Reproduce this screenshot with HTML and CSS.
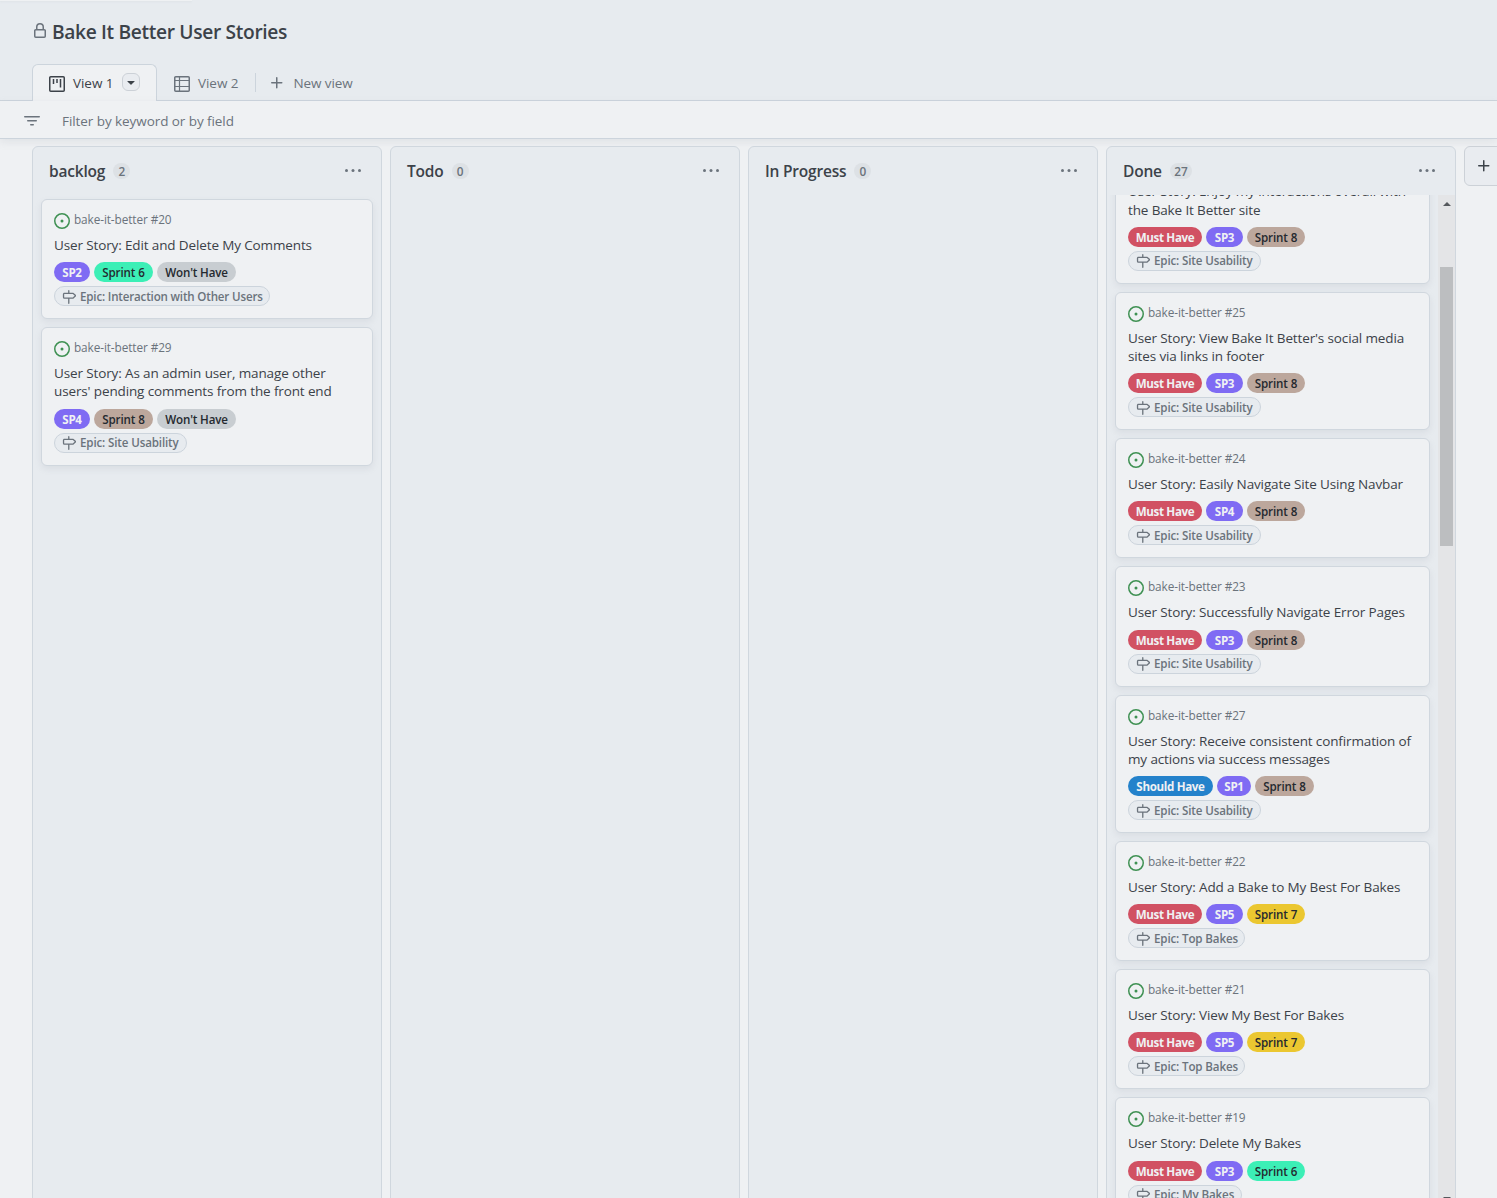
FILE: index.html
```
<!DOCTYPE html>
<html lang="en">
<head>
<meta charset="utf-8">
<title>Bake It Better User Stories</title>
<link rel="stylesheet" href="styles.css">
</head>
<body>
<svg class="sprite" aria-hidden="true">
  <symbol id="lock" viewBox="0 0 16 16"><path d="M4 4a4 4 0 0 1 8 0v2h.25c.966 0 1.75.784 1.75 1.75v5.5A1.75 1.75 0 0 1 12.25 15h-8.5A1.75 1.75 0 0 1 2 13.25v-5.5C2 6.784 2.784 6 3.75 6H4Zm8.25 3.5h-8.5a.25.25 0 0 0-.25.25v5.5c0 .138.112.25.25.25h8.5a.25.25 0 0 0 .25-.25v-5.5a.25.25 0 0 0-.25-.25ZM10.5 6V4a2.5 2.5 0 1 0-5 0v2Z"/></symbol>
  <symbol id="board-icon" viewBox="0 0 16 16"><path fill="none" stroke="currentColor" stroke-width="1.5" d="M1.75.75h12.5a1 1 0 0 1 1 1v12.500a1 1 0 0 1-1 1H1.750a1 1 0 0 1-1-1V1.750a1 1 0 0 1 1-1ZM4.500 3v5M8 3v4M11.500 3v8.500"/></symbol>
  <symbol id="table-icon" viewBox="0 0 16 16"><path fill="none" stroke="currentColor" stroke-width="1.5" d="M1.750.75h12.500a1 1 0 0 1 1 1v12.500a1 1 0 0 1-1 1H1.750a1 1 0 0 1-1-1V1.750a1 1 0 0 1 1-1Z"/><path fill="none" stroke="currentColor" stroke-width="1.2" d="M.75 4.500h14.500M5.500.75v14.500M.75 10.500h14.500"/></symbol>
  <symbol id="plus" viewBox="0 0 16 16"><path d="M7.750 2a.75.75 0 0 1 .75.75V7h4.250a.75.75 0 0 1 0 1.500H8.500v4.250a.75.75 0 0 1-1.500 0V8.500H2.750a.75.75 0 0 1 0-1.500H7V2.750A.75.75 0 0 1 7.750 2Z"/></symbol>
  <symbol id="caret" viewBox="0 0 16 16"><path d="m4.427 7.427 3.396 3.396a.25.25 0 0 0 .354 0l3.396-3.396A.25.25 0 0 0 11.396 7H4.604a.25.25 0 0 0-.177.427Z"/></symbol>
  <symbol id="filter" viewBox="0 0 16 16"><path d="M.75 3h14.500a.75.75 0 0 1 0 1.500H.75a.75.75 0 0 1 0-1.500ZM3 7.750A.75.75 0 0 1 3.750 7h8.500a.75.75 0 0 1 0 1.500h-8.500A.75.75 0 0 1 3 7.750Zm3 4a.75.75 0 0 1 .75-.75h2.500a.75.75 0 0 1 0 1.500h-2.500a.75.75 0 0 1-.75-.75Z"/></symbol>
  <symbol id="dots" viewBox="0 0 16 16"><circle cx="1.500" cy="7.500" r="1.500"/><circle cx="8" cy="7.500" r="1.500"/><circle cx="14.500" cy="7.500" r="1.500"/></symbol>
  <symbol id="open" viewBox="0 0 16 16"><path d="M8 9.500a1.500 1.500 0 1 0 0-3 1.500 1.500 0 0 0 0 3Z"/><path d="M8 0a8 8 0 1 1 0 16A8 8 0 0 1 8 0ZM1.500 8a6.500 6.500 0 1 0 13 0 6.500 6.500 0 0 0-13 0Z"/></symbol>
  <symbol id="milestone" viewBox="0 0 16 16"><path d="M7.750 0a.75.75 0 0 1 .75.75V3h3.634c.414 0 .814.147 1.130.414l2.070 1.750a1.750 1.750 0 0 1 0 2.672l-2.070 1.750a1.750 1.750 0 0 1-1.130.414H8.500v5.250a.75.75 0 0 1-1.500 0V10H2.750A1.750 1.750 0 0 1 1 8.250v-3.500C1 3.784 1.784 3 2.750 3H7V.75A.75.75 0 0 1 7.750 0Zm4.384 8.500a.25.25 0 0 0 .161-.06l2.070-1.750a.248.248 0 0 0 0-.38l-2.070-1.750a.25.25 0 0 0-.161-.06H2.750a.25.25 0 0 0-.25.25v3.500c0 .138.112.25.25.25h9.384Z"/></symbol>
</svg>

<header class="project-header">
  <div class="top-strip"></div>
  <h1><svg class="icon"><use href="#lock"/></svg>Bake It Better User Stories</h1>
  <nav class="tabs">
    <a class="tab active"><svg class="icon"><use href="#board-icon"/></svg><span>View 1</span><span class="tab-menu"><svg class="icon"><use href="#caret"/></svg></span></a>
    <a class="tab"><svg class="icon"><use href="#table-icon"/></svg><span>View 2</span></a>
    <span class="divider"></span>
    <a class="tab new-view"><svg class="icon"><use href="#plus"/></svg><span>New view</span></a>
  </nav>
</header>

<div class="filter-bar"><svg class="icon"><use href="#filter"/></svg><span>Filter by keyword or by field</span></div>

<main class="board">
  <section class="column">
    <div class="column-head"><h2>backlog</h2><span class="count">2</span><svg class="icon"><use href="#dots"/></svg></div>
    <div class="cards">
      <article class="card">
        <div class="meta"><svg class="icon"><use href="#open"/></svg><span>bake-it-better #20</span></div>
        <p>User Story: Edit and Delete My Comments</p>
        <div class="labels"><span class="label sp left">SP2</span><span class="label sprint green left">Sprint 6</span><span class="label wont">Won't Have</span><span class="label epic users"><svg class="icon"><use href="#milestone"/></svg>Epic: Interaction with Other Users</span></div>
      </article>
      <article class="card">
        <div class="meta"><svg class="icon"><use href="#open"/></svg><span>bake-it-better #29</span></div>
        <p>User Story: As an admin user, manage other<br>users' pending comments from the front end</p>
        <div class="labels"><span class="label sp left">SP4</span><span class="label sprint brown left">Sprint 8</span><span class="label wont">Won't Have</span><span class="label epic site"><svg class="icon"><use href="#milestone"/></svg>Epic: Site Usability</span></div>
      </article>
    </div>
  </section>

  <section class="column">
    <div class="column-head"><h2>Todo</h2><span class="count">0</span><svg class="icon"><use href="#dots"/></svg></div>
  </section>

  <section class="column">
    <div class="column-head"><h2>In Progress</h2><span class="count">0</span><svg class="icon"><use href="#dots"/></svg></div>
  </section>

  <section class="column">
    <div class="column-head"><h2>Done</h2><span class="count">27</span><svg class="icon"><use href="#dots"/></svg></div>
    <div class="scroller">
      <div class="cards scrolled">
        <article class="card">
          <div class="meta"></div>
          <p>User Story: Enjoy my interactions overall with<br>the Bake It Better site</p>
          <div class="labels"><span class="label must">Must Have</span><span class="label sp">SP3</span><span class="label sprint brown">Sprint 8</span><span class="label epic site"><svg class="icon"><use href="#milestone"/></svg>Epic: Site Usability</span></div>
        </article>
        <article class="card">
          <div class="meta"><svg class="icon"><use href="#open"/></svg><span>bake-it-better #25</span></div>
          <p>User Story: View Bake It Better's social media<br>sites via links in footer</p>
          <div class="labels"><span class="label must">Must Have</span><span class="label sp">SP3</span><span class="label sprint brown">Sprint 8</span><span class="label epic site"><svg class="icon"><use href="#milestone"/></svg>Epic: Site Usability</span></div>
        </article>
        <article class="card">
          <div class="meta"><svg class="icon"><use href="#open"/></svg><span>bake-it-better #24</span></div>
          <p>User Story: Easily Navigate Site Using Navbar</p>
          <div class="labels"><span class="label must">Must Have</span><span class="label sp">SP4</span><span class="label sprint brown">Sprint 8</span><span class="label epic site"><svg class="icon"><use href="#milestone"/></svg>Epic: Site Usability</span></div>
        </article>
        <article class="card">
          <div class="meta"><svg class="icon"><use href="#open"/></svg><span>bake-it-better #23</span></div>
          <p>User Story: Successfully Navigate Error Pages</p>
          <div class="labels"><span class="label must">Must Have</span><span class="label sp">SP3</span><span class="label sprint brown">Sprint 8</span><span class="label epic site"><svg class="icon"><use href="#milestone"/></svg>Epic: Site Usability</span></div>
        </article>
        <article class="card">
          <div class="meta"><svg class="icon"><use href="#open"/></svg><span>bake-it-better #27</span></div>
          <p>User Story: Receive consistent confirmation of<br>my actions via success messages</p>
          <div class="labels"><span class="label should">Should Have</span><span class="label sp narrow">SP1</span><span class="label sprint brown left">Sprint 8</span><span class="label epic site"><svg class="icon"><use href="#milestone"/></svg>Epic: Site Usability</span></div>
        </article>
        <article class="card">
          <div class="meta"><svg class="icon"><use href="#open"/></svg><span>bake-it-better #22</span></div>
          <p>User Story: Add a Bake to My Best For Bakes</p>
          <div class="labels"><span class="label must">Must Have</span><span class="label sp">SP5</span><span class="label sprint yellow">Sprint 7</span><span class="label epic top"><svg class="icon"><use href="#milestone"/></svg>Epic: Top Bakes</span></div>
        </article>
        <article class="card">
          <div class="meta"><svg class="icon"><use href="#open"/></svg><span>bake-it-better #21</span></div>
          <p>User Story: View My Best For Bakes</p>
          <div class="labels"><span class="label must">Must Have</span><span class="label sp">SP5</span><span class="label sprint yellow">Sprint 7</span><span class="label epic top"><svg class="icon"><use href="#milestone"/></svg>Epic: Top Bakes</span></div>
        </article>
        <article class="card">
          <div class="meta"><svg class="icon"><use href="#open"/></svg><span>bake-it-better #19</span></div>
          <p>User Story: Delete My Bakes</p>
          <div class="labels"><span class="label must">Must Have</span><span class="label sp">SP3</span><span class="label sprint green">Sprint 6</span><span class="label epic my"><svg class="icon"><use href="#milestone"/></svg>Epic: My Bakes</span></div>
        </article>
      </div>
      <div class="scrollbar"><i class="up"></i><i class="thumb"></i><i class="down"></i></div>
    </div>
  </section>

  <div class="add-column"><svg class="icon"><use href="#plus"/></svg></div>
</main>
</body>
</html>
```
FILE: styles.css
```
* { box-sizing: border-box; }
html { height: 100%; overflow: hidden; }
body {
  margin: 0;
  height: 1198px;
  overflow: hidden;
  display: flex;
  flex-direction: column;
  background: #eff1f3;
  color: #3c4249;
  font: 13.5px/1.3 "Open Sans", "Noto Sans", sans-serif;
  letter-spacing: -0.1px;
}
h1, h2, p { margin: 0; }
.sprite { position: absolute; width: 0; height: 0; }
.icon { width: 16px; height: 16px; flex: none; fill: currentColor; color: #6b737c; display: block; }

.project-header {
  flex: none;
  height: 101px;
  background: #e7ebef;
  border-bottom: 1px solid #ccd4dc;
  padding: 18px 32px 0;
}
.top-strip {
  position: absolute;
  top: 0;
  left: 0;
  width: 192px;
  height: 1px;
  background: #eff1f3;
  box-shadow: 0 1px 2px rgba(140, 149, 159, .12), 0 8px 24px rgba(140, 149, 159, .04);
}
h1 {
  display: flex;
  align-items: center;
  gap: 4px;
  height: 28px;
  font-size: 19.2px;
  font-weight: 600;
  letter-spacing: -0.34px;
}
h1 .icon { margin-top: -2px; }

.tabs { display: flex; height: 37px; margin-top: 18px; }
.tab { display: flex; align-items: center; gap: 8px; color: #6b737c; padding: 2px 17px 0; letter-spacing: -0.05px; }
.tab.active {
  color: #3c4249;
  width: 125px;
  padding: 1px 16px 0 16px;
  border: 1px solid #ccd4dc;
  border-bottom: 0;
  border-radius: 6px 6px 0 0;
  background: #eff1f3;
}
.tab.active .icon { color: #3c4249; }
.tab-menu {
  width: 18px;
  height: 18px;
  border: 1px solid #ccd1d7;
  border-radius: 6px;
  background: #e9ecf0;
  display: flex;
  align-items: center;
  justify-content: center;
  margin: -3px 0 0 auto;
}
.divider { width: 1px; height: 19px; background: #ccd4dc; align-self: center; }
.new-view { padding-left: 13px; letter-spacing: -0.1px; }
.new-view > .icon { margin-top: -2px; }

.filter-bar {
  flex: none;
  height: 38px;
  padding: 3px 24px 0;
  display: flex;
  align-items: center;
  gap: 22px;
  color: #6b737c;
  border-bottom: 1px solid #ccd4dc;
  box-shadow: 0 3px 8px rgba(140, 149, 159, .16);
  letter-spacing: -0.07px;
}
.filter-bar span { padding-top: 1px; }

.board { display: flex; flex: none; gap: 8px; height: 1061px; padding: 7px 0 0 32px; overflow: hidden; }
.column {
  width: 350px;
  flex: none;
  display: flex;
  flex-direction: column;
  background: #e7ebef;
  border: 1px solid #d0d7de;
  border-radius: 6px 6px 0 0;
}
.column-head { display: flex; align-items: center; height: 48px; padding: 0 20px 0 16px; flex: none; }
h2 { font-size: 15.5px; font-weight: 600; letter-spacing: -0.2px; line-height: 24px; }
.count {
  height: 16px;
  min-width: 17px;
  padding: 0 4.500px;
  margin-left: 8px;
  border-radius: 8px;
  background: #dde1e5;
  color: #6b737c;
  font-size: 11.800px;
  font-weight: 600;
  line-height: 16px;
  text-align: center;
}
.column-head .icon { margin-left: auto; }

.cards { display: flex; flex-direction: column; gap: 8px; padding: 4px 8px; flex: 1; min-width: 0; }
.card {
  flex: none;
  padding: 12px;
  background: #eff1f3;
  border: 1px solid #d0d7de;
  border-radius: 6px;
  box-shadow: 0 3px 6px rgba(140, 149, 159, .15);
}
.meta {
  display: flex;
  gap: 4px;
  height: 24px;
  font-size: 11.8px;
  line-height: 14px;
  letter-spacing: -0.1px;
  color: #6b737c;
}
.meta .icon { color: #3f9153; margin-top: 1px; }
.card p { line-height: 18.2px; letter-spacing: -0.13px; white-space: nowrap; }
.labels { display: flex; flex-wrap: wrap; gap: 4px; margin-top: 8px; }
.label {
  height: 20px;
  border-radius: 10px;
  font-size: 11.6px;
  font-weight: 700;
  line-height: 21.4px;
  text-align: center;
  white-space: nowrap;
  letter-spacing: -0.34px;
  color: #eff1f3;
}
.sp { width: 37px; background: #7f6bf3; }
.sp.left { width: 36px; }
.sp.narrow { width: 34px; }
.sprint { width: 58px; color: #24292f; font-weight: 600; letter-spacing: -0.12px; }
.sprint.left { width: 59px; }
.green { background: #3cefb6; }
.brown { background: #bca79c; }
.yellow { background: #ebc730; }
.wont { width: 79px; background: #c8cdd1; color: #24292f; font-weight: 600; letter-spacing: -0.16px; }
.must { width: 74px; background: #d15163; }
.should { width: 85px; background: #2482cb; }
.epic {
  display: flex;
  align-items: center;
  gap: 4px;
  padding: 1.400px 0 0 7px;
  border: 1px solid #ccd4dc;
  background: #e7ebef;
  color: #6b737c;
  font-weight: 600;
  line-height: 16px;
  letter-spacing: -0.14px;
}
.epic .icon { width: 14px; height: 14px; }
.users { width: 216px; letter-spacing: -0.18px; }
.site { width: 133px; }
.top { width: 117px; }
.my { width: 114px; }

.scroller { display: flex; flex: 1; min-height: 0; overflow: hidden; }
.scrolled { margin-top: -53.650px; }
.scrollbar {
  width: 17px;
  flex: none;
  background: #e4e5e7;
  display: flex;
  flex-direction: column;
  align-items: center;
}
.scrollbar i { flex: none; }
.up { margin-top: 7px; border: 4px solid transparent; border-top: 0; border-bottom: 4px solid #55595d; }
.thumb { width: 13px; height: 279px; margin-top: 61px; background: #bcbec0; }
.down { margin-top: 651px; border: 4px solid transparent; border-bottom: 0; border-top: 4px solid #55595d; }

.add-column {
  width: 48px;
  height: 40px;
  flex: none;
  padding: 11px;
  background: #e9ecf0;
  border: 1px solid #ccd1d7;
  border-radius: 6px;
}
.add-column .icon { color: #3c4249; }
```
